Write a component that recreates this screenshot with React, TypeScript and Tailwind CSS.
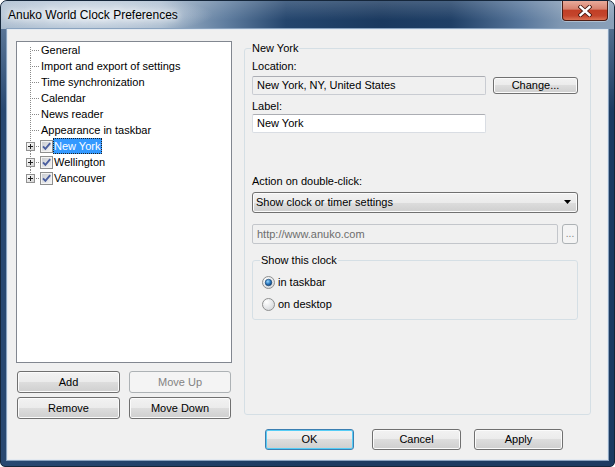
import React from "react";

const FONT = "font-['Liberation_Sans',Arial,sans-serif]";

const FACE =
  "flex items-center rounded-[3px] border border-[#707070] bg-[linear-gradient(180deg,#f2f2f2_0%,#ebebeb_50%,#dddddd_50%,#cfcfcf_100%)] shadow-[inset_0_0_0_1px_#fbfbfb] text-black leading-none";
const BTN = `${FACE} justify-center`;
const DD = `${FACE} justify-between`;
const BTN_DIS =
  "flex items-center justify-center rounded-[3px] border border-[#adb2b5] bg-[#f4f4f4] text-[#838383] leading-none";
const BTN_DEF =
  "flex items-center justify-center rounded-[3px] border border-[#3c7fb1] bg-[linear-gradient(180deg,#f2f2f2_0%,#ebebeb_50%,#dddddd_50%,#cfcfcf_100%)] shadow-[inset_0_0_0_1px_#56cdf6] text-black leading-none";

function LeafGutter({ first }: { first: boolean }) {
  return (
    <svg width="24" height="16" viewBox="0 0 24 16" className="shrink-0">
      <line x1="13.5" y1={first ? 5 : 0} x2="13.5" y2="16" stroke="#8a8a8a" strokeDasharray="1 1" />
      <line x1="15" y1="8.5" x2="23" y2="8.5" stroke="#8a8a8a" strokeDasharray="1 1" />
    </svg>
  );
}

function ClockGutter({ last }: { last: boolean }) {
  return (
    <svg width="23" height="16" viewBox="0 0 23 16" className="shrink-0">
      <defs>
        <linearGradient id="pbg" x1="0" y1="0" x2="0.8" y2="1">
          <stop offset="0" stopColor="#ffffff" />
          <stop offset="1" stopColor="#d6d6d6" />
        </linearGradient>
      </defs>
      <line x1="13.5" y1="0" x2="13.5" y2="4" stroke="#8a8a8a" strokeDasharray="1 1" />
      {!last && <line x1="13.5" y1="13" x2="13.5" y2="16" stroke="#8a8a8a" strokeDasharray="1 1" />}
      <rect x="9.5" y="4.5" width="8" height="8" fill="url(#pbg)" stroke="#919191" />
      <line x1="11" y1="8.5" x2="16" y2="8.5" stroke="#1f1f1f" />
      <line x1="13.5" y1="6" x2="13.5" y2="11" stroke="#1f1f1f" />
      <line x1="19" y1="8.5" x2="23" y2="8.5" stroke="#8a8a8a" strokeDasharray="1 1" />
    </svg>
  );
}

function TreeCheck() {
  return (
    <svg width="13" height="13" viewBox="0 0 13 13" className="shrink-0">
      <defs>
        <linearGradient id="cbg" x1="0" y1="0" x2="1" y2="1">
          <stop offset="0" stopColor="#c9ccd1" />
          <stop offset="1" stopColor="#f4f4f4" />
        </linearGradient>
      </defs>
      <rect x="0.5" y="0.5" width="12" height="12" fill="#f3f3f3" stroke="#8e8f8f" />
      <rect x="2" y="2" width="9" height="9" fill="url(#cbg)" />
      <path d="M3 6.3 L5.4 8.9 L10.2 3.2" fill="none" stroke="#4b5f9f" strokeWidth="1.9" />
    </svg>
  );
}

function Radio({ checked }: { checked: boolean }) {
  return (
    <svg width="13" height="13" viewBox="0 0 13 13" className="shrink-0">
      <defs>
        <radialGradient id="rfill" cx="0.35" cy="0.3" r="0.85">
          <stop offset="0" stopColor="#ffffff" />
          <stop offset="1" stopColor="#cfd2d6" />
        </radialGradient>
        <radialGradient id="rdot" cx="0.4" cy="0.35" r="0.7">
          <stop offset="0" stopColor="#9ad8ff" />
          <stop offset="0.55" stopColor="#2a78c0" />
          <stop offset="1" stopColor="#0c3b70" />
        </radialGradient>
      </defs>
      <circle cx="6.5" cy="6.5" r="6" fill="url(#rfill)" stroke="#8e8f8f" />
      {checked && <circle cx="6.5" cy="6.5" r="3.3" fill="url(#rdot)" stroke="#173f68" strokeWidth="0.6" />}
    </svg>
  );
}

const leaves = [
  "General",
  "Import and export of settings",
  "Time synchronization",
  "Calendar",
  "News reader",
  "Appearance in taskbar",
];
const clocks = ["New York", "Wellington", "Vancouver"];

export default function App() {
  return (
    <div
      className={`w-[615px] h-[467px] flex flex-col overflow-hidden rounded-t-[7px] rounded-b-[5px] border border-[#15263a] ${FONT} bg-[linear-gradient(180deg,rgba(150,172,196,0.6)_0px,rgba(150,172,196,0)_110px),linear-gradient(90deg,#284871,#1c3b61_50%,#1c3b61)]`}
    >
      {/* Title bar */}
      <div className="h-[28px] shrink-0 flex items-start justify-between bg-[radial-gradient(ellipse_120px_20px_at_92px_14px,rgba(232,238,245,0.95),rgba(232,238,245,0)),linear-gradient(180deg,rgba(255,255,255,0.18),rgba(255,255,255,0)_70%),linear-gradient(90deg,#a9bbce_0px,#a4b7cb_160px,#5f7d9f_225px,#24456d_285px,#1a395f_380px,#1f3f66_450px,#56759a_520px,#7f97b2_560px,#8ba1ba_615px)]">
        <div className="h-[28px] flex items-center pl-[7px] text-[12px] text-black [text-shadow:0_0_6px_#ffffff,0_0_10px_#ffffff]">
          Anuko World Clock Preferences
        </div>
        <div className="mr-[6px] w-[46px] h-[20px] flex items-center justify-center rounded-b-[4px] border border-t-0 border-[#4d1d14] shadow-[0_0_0_1px_rgba(255,255,255,0.35)] bg-[linear-gradient(180deg,#e9ab9b_0%,#d8826f_42%,#c23f26_50%,#c4452c_78%,#dc7254_100%)]">
          <svg width="14" height="12" viewBox="0 0 14 12">
            <path d="M2.5 2 L11.5 10 M11.5 2 L2.5 10" stroke="#45170f" strokeWidth="4.2" strokeLinecap="square" />
            <path d="M2.5 2 L11.5 10 M11.5 2 L2.5 10" stroke="#ffffff" strokeWidth="2.4" strokeLinecap="square" />
          </svg>
        </div>
      </div>

      {/* Frame body */}
      <div className="flex-1 flex px-[6px] pb-[6px]">
        <div className="flex-1 flex flex-col bg-[#f0f0f0] border border-[#e4eaf1] shadow-[0_0_0_1px_#8aa3bf] text-[11px] text-black">
          {/* top row */}
          <div className="flex items-start h-[389px]">
            {/* left column */}
            <div className="ml-[8px] mt-[11px] w-[216px] flex flex-col">
              <div className="h-[322px] border border-[#828790] bg-white flex flex-col">
                {leaves.map((t, i) => (
                  <div key={t} className="h-[16px] flex items-center">
                    <LeafGutter first={i === 0} />
                    <span className="leading-[16px] whitespace-nowrap">{t}</span>
                  </div>
                ))}
                {clocks.map((t, i) => (
                  <div key={t} className="h-[16px] flex items-center">
                    <ClockGutter last={i === clocks.length - 1} />
                    <TreeCheck />
                    <span
                      className={
                        i === 0
                          ? "h-[16px] leading-[14px] pr-[1px] border border-dotted border-[#222222] bg-[#3399ff] text-white whitespace-nowrap"
                          : "h-[16px] leading-[14px] pr-[1px] border border-transparent whitespace-nowrap"
                      }
                    >
                      {t}
                    </span>
                  </div>
                ))}
              </div>
              <div className="mt-[8px] pl-[1px] grid grid-cols-[103px_102px] gap-x-[9px] gap-y-[4px]">
                <div className={`${BTN} h-[22px]`}>Add</div>
                <div className={`${BTN_DIS} h-[22px]`}>Move Up</div>
                <div className={`${BTN} h-[22px]`}>Remove</div>
                <div className={`${BTN} h-[22px]`}>Move Down</div>
              </div>
            </div>

            {/* right group box */}
            <div className="ml-[12px] mt-[18px] w-[347px] h-[367px] border border-[#d5dfe5] rounded-[3px] flex flex-col pl-[7px]">
              <div className="-mt-[8px] -ml-[1px] self-start px-[1px] bg-[#f0f0f0] leading-[15px]">New York</div>
              <div className="mt-[3px] leading-[15px]">Location:</div>
              <div className="mt-[2px] flex items-center">
                <div className="h-[19px] w-[234px] flex items-center pl-[4px] bg-[#f0f0f0] border border-[#c9ccd2] border-t-[#abadb3] rounded-[2px]">
                  New York, NY, United States
                </div>
                <div className={`${BTN} ml-[7px] w-[85px] h-[17px]`}>Change...</div>
              </div>
              <div className="mt-[4px] leading-[15px]">Label:</div>
              <div className="h-[19px] w-[234px] flex items-center pl-[4px] bg-white border border-[#d9dde3] border-t-[#abadb3] rounded-[2px]">
                New York
              </div>
              <div className="mt-[41px] leading-[15px]">Action on double-click:</div>
              <div className={`${DD} mt-[3px] w-[326px] h-[21px] pl-[3px] pr-[5px]`}>
                <span>Show clock or timer settings</span>
                <svg width="8" height="5" viewBox="0 0 8 5">
                  <path d="M0 0 H7 L3.5 4 Z" fill="#000000" />
                </svg>
              </div>
              <div className="mt-[11px] flex items-center">
                <div className="h-[20px] w-[306px] flex items-center pl-[4px] bg-[#f0f0f0] border border-[#c3c6cb] rounded-[2px] text-[#6d6d6d]">
                  http://www.anuko.com
                </div>
                <div className={`${BTN_DIS} ml-[4px] w-[16px] h-[20px] items-end pb-[4px] text-[10px]`}>...</div>
              </div>
              <div className="mt-[16px] w-[326px] h-[60px] border border-[#d5dfe5] rounded-[3px] flex flex-col">
                <div className="-mt-[8px] ml-[7px] self-start px-[1px] bg-[#f0f0f0] leading-[15px]">Show this clock</div>
                <div className="mt-[6px] h-[16px] pl-[9px] flex items-center">
                  <Radio checked={true} />
                  <span className="ml-[3px]">in taskbar</span>
                </div>
                <div className="mt-[6px] h-[16px] pl-[9px] flex items-center">
                  <Radio checked={false} />
                  <span className="ml-[3px]">on desktop</span>
                </div>
              </div>
            </div>
          </div>

          {/* bottom buttons */}
          <div className="mt-[10px] flex pl-[257px]">
            <div className={`${BTN_DEF} w-[89px] h-[21px]`}>OK</div>
            <div className={`${BTN} ml-[18px] w-[89px] h-[21px]`}>Cancel</div>
            <div className={`${BTN} ml-[13px] w-[89px] h-[21px]`}>Apply</div>
          </div>
        </div>
      </div>
    </div>
  );
}
